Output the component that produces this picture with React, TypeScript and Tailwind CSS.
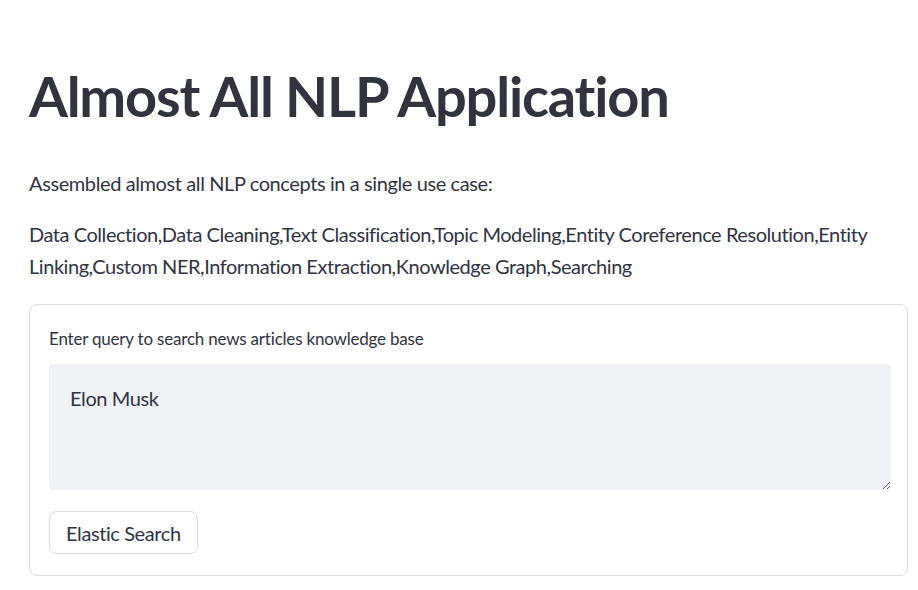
export default function App() {
  return (
    <div className="min-h-[590px] bg-white pl-[29px] pr-[10px] pt-[58px] text-[#31333f] font-['Lato',sans-serif]">
      <h1 className="text-[56px] font-bold leading-[76px] tracking-[-1.2px]">
        Almost All NLP Application
      </h1>

      <p className="mt-[33px] text-[20px] leading-[32px] tracking-[-0.4px]">
        Assembled almost all NLP concepts in a single use case:
      </p>
      <p className="mt-[19px] text-[20px] leading-[32px] tracking-[-0.45px]">
        Data Collection,Data Cleaning,Text Classification,Topic Modeling,Entity Coreference Resolution,Entity
        Linking,Custom NER,Information Extraction,Knowledge Graph,Searching
      </p>

      <form className="mt-[22px] rounded-lg border border-[#dcdde1] pt-[20px] pb-[21px] pl-[19px] pr-[16px]">
        <label className="block text-[17px] leading-[28px] tracking-[-0.2px]">
          Enter query to search news articles knowledge base
        </label>
        <textarea
          className="mt-[11px] block h-[126px] w-full rounded bg-[#f0f2f6] px-[21px] py-[20px] text-[20px] leading-[28px] tracking-[-0.4px] text-[#31333f] outline-none"
          defaultValue="Elon Musk"
        />
        <button
          type="button"
          className="mt-[21px] h-[43px] rounded-lg border border-[#dcdde1] bg-white px-[16px] text-[20px] tracking-[-0.4px]"
        >
          Elastic Search
        </button>
      </form>
    </div>
  );
}
